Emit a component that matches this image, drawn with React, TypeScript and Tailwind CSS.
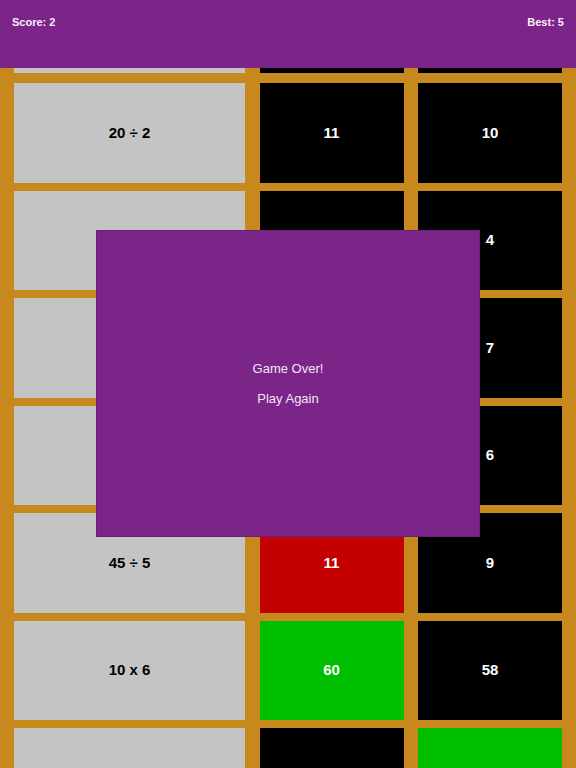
type Cell = { text?: string; color: "gray" | "black" | "red" | "green" };

const rows: Cell[][] = [
  [{ text: "20 ÷ 2", color: "gray" }, { text: "11", color: "black" }, { text: "10", color: "black" }],
  [{ text: "12 ÷ 3", color: "gray" }, { text: "5", color: "black" }, { text: "4", color: "black" }],
  [{ text: "2 x 4", color: "gray" }, { text: "8", color: "black" }, { text: "7", color: "black" }],
  [{ text: "3 x 2", color: "gray" }, { text: "5", color: "black" }, { text: "6", color: "black" }],
  [{ text: "45 ÷ 5", color: "gray" }, { text: "11", color: "red" }, { text: "9", color: "black" }],
  [{ text: "10 x 6", color: "gray" }, { text: "60", color: "green" }, { text: "58", color: "black" }],
  [{ color: "gray" }, { color: "black" }, { color: "green" }],
];

const bg: Record<Cell["color"], string> = {
  gray: "bg-[#c4c4c4] text-black",
  black: "bg-black text-white",
  red: "bg-[#c40000] text-white",
  green: "bg-[#00bf00] text-white",
};

function Tile({ cell, className = "" }: { cell: Cell; className?: string }) {
  return (
    <div className={`flex items-center justify-center text-[15px] font-bold ${bg[cell.color]} ${className}`}>
      {cell.text}
    </div>
  );
}

export default function App() {
  return (
    <div
      className="relative w-[576px] h-[768px] overflow-hidden bg-[#c7891d]"
      style={{ fontFamily: '"Liberation Sans", Arial, sans-serif' }}
    >
      {/* Header */}
      <header className="h-[68px] bg-[#7b2589] flex items-start justify-between px-3 pt-[14px] text-[11px] font-bold text-[#fbeefb]">
        <span>Score: 2</span>
        <span>Best: 5</span>
      </header>

      {/* Partially scrolled row */}
      <div className="grid grid-cols-[231px_144px_144px] gap-x-[14.5px] px-[14px]">
        <div className="h-[5px] bg-[#c4c4c4]" />
        <div className="h-[5px] bg-black" />
        <div className="h-[5px] bg-black" />
      </div>

      {/* Board */}
      <div className="mt-[10px] grid grid-cols-[231px_144px_144px] gap-x-[14.5px] gap-y-2 px-[14px]">
        {rows.map((row, i) =>
          row.map((cell, j) => <Tile key={`${i}-${j}`} cell={cell} className="h-[99.5px]" />)
        )}
      </div>

      {/* Game over dialog */}
      <div className="absolute left-[96px] top-[230px] w-[384px] h-[307px] bg-[#7b2589] border border-[#6b1f78] flex flex-col items-center justify-center gap-[15px] text-[13px] leading-[15px] text-[#f3e6f4]">
        <p>Game Over!</p>
        <button className="leading-[15px]">Play Again</button>
      </div>
    </div>
  );
}
